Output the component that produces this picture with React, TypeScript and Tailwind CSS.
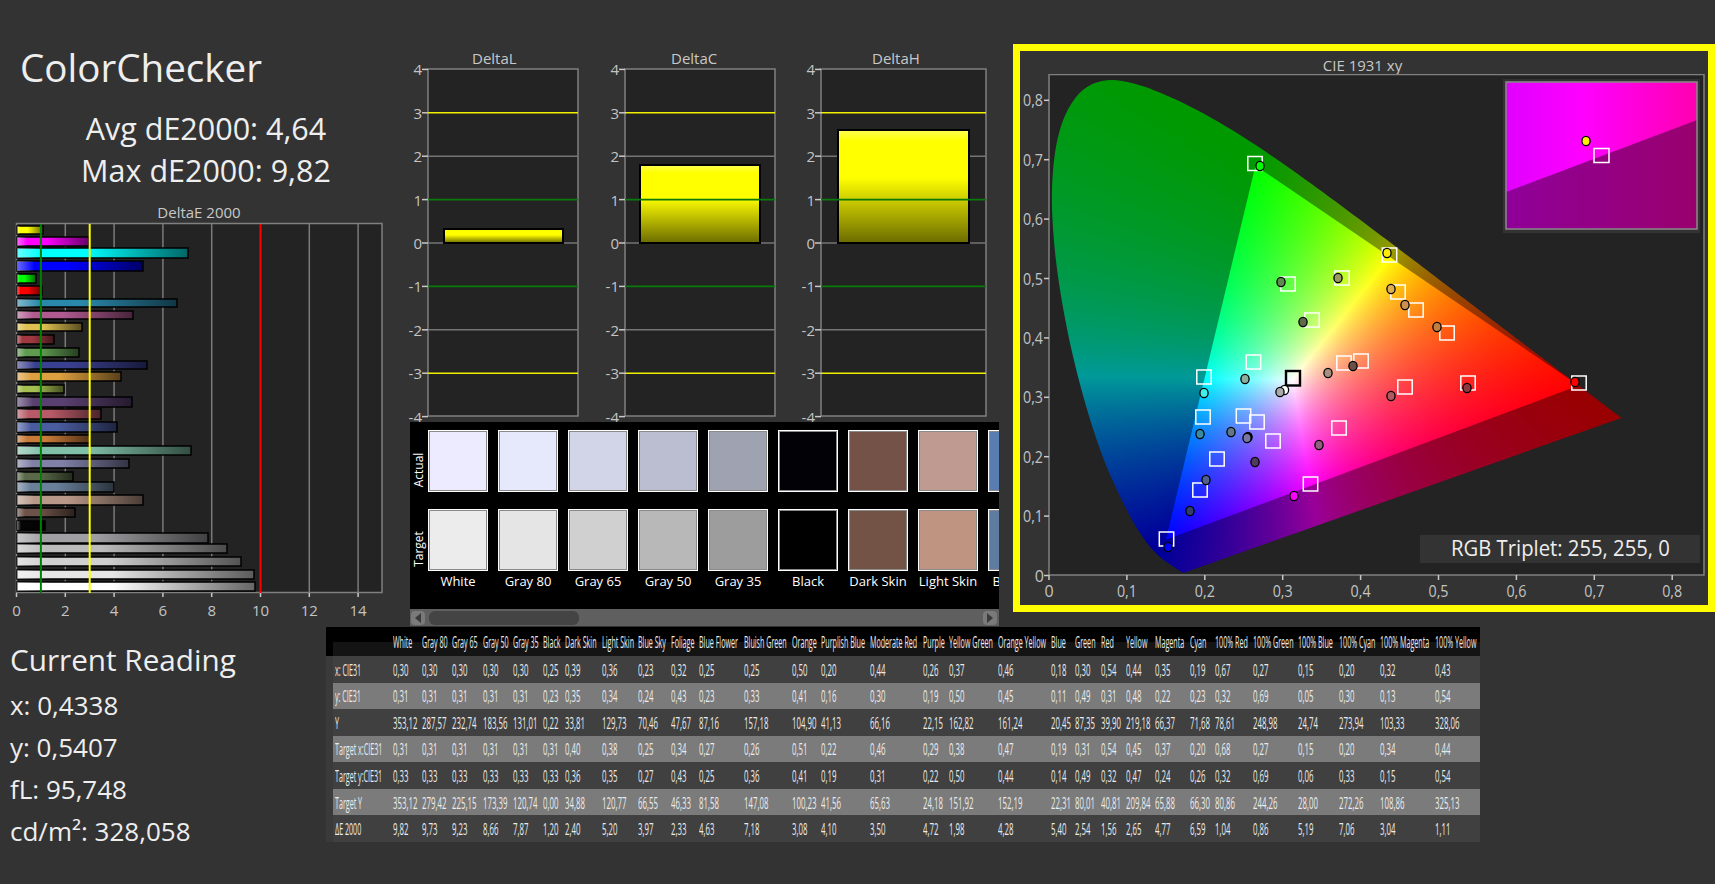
import { useMemo } from "react"

const LOCUS = [
  [0.1741, 0.005], [0.1733, 0.0048], [0.1714, 0.0051], [0.1689, 0.0069], [0.1644, 0.0109], [0.1611, 0.0138],
  [0.1566, 0.0177], [0.151, 0.0227], [0.144, 0.0297], [0.1355, 0.0399], [0.1241, 0.0578], [0.1096, 0.0868],
  [0.0913, 0.1327], [0.0687, 0.2007], [0.0454, 0.295], [0.0235, 0.4127], [0.0082, 0.5384], [0.0039, 0.6548],
  [0.0139, 0.7502], [0.0389, 0.812], [0.0743, 0.8338], [0.1142, 0.8262], [0.1547, 0.8059], [0.1929, 0.7816],
  [0.2296, 0.7543], [0.2658, 0.7243], [0.3016, 0.6923], [0.3373, 0.6589], [0.3731, 0.6245], [0.4087, 0.5896],
  [0.4441, 0.5547], [0.4788, 0.5202], [0.5125, 0.4866], [0.5448, 0.4544], [0.5752, 0.4242], [0.6029, 0.3965],
  [0.627, 0.3725], [0.6482, 0.3514], [0.6658, 0.334], [0.6801, 0.3197], [0.6915, 0.3083], [0.7006, 0.2993],
  [0.7079, 0.292], [0.714, 0.2859], [0.719, 0.2809], [0.726, 0.274], [0.7347, 0.2653],
]

// P3 primaries, measured off the target squares
const GAMUT = [[0.68, 0.32], [0.265, 0.69], [0.15, 0.06]]

const px = (x: number) => 1049 + 779 * x
const py = (y: number) => 575.5 - 594 * y

// catmull-rom through the 5nm points so the horseshoe stays round
function smoothLocus() {
  const out: number[][] = []
  const n = LOCUS.length
  for (let i = 0; i < n - 1; i++) {
    const p0 = LOCUS[Math.max(i - 1, 0)]
    const p1 = LOCUS[i]
    const p2 = LOCUS[i + 1]
    const p3 = LOCUS[Math.min(i + 2, n - 1)]
    for (let k = 0; k < 6; k++) {
      const t = k / 6
      const f = (a: number, b: number, c: number, d: number) =>
        0.5 * (2 * b + (c - a) * t + (2 * a - 5 * b + 4 * c - d) * t * t + (3 * b - a - 3 * c + d) * t * t * t)
      out.push([f(p0[0], p1[0], p2[0], p3[0]), f(p0[1], p1[1], p2[1], p3[1])])
    }
  }
  out.push(LOCUS[n - 1])
  return out
}

function chroma(x: number, y: number, level: number) {
  const X = x / y
  const Z = (1 - x - y) / y
  const R = Math.max(2.4935 * X - 0.9314 - 0.4027 * Z, 0)
  const G = Math.max(-0.8295 * X + 1.7627 + 0.0236 * Z, 0)
  const B = Math.max(0.0358 * X - 0.0762 + 0.9569 * Z, 0)
  const f = level / (Math.max(R, G, B) || 1)
  return `rgb(${Math.round(R * f)},${Math.round(G * f)},${Math.round(B * f)})`
}

function inLocus(x: number, y: number) {
  let hit = false
  for (let i = 0, j = LOCUS.length - 1; i < LOCUS.length; j = i++) {
    const [xi, yi] = LOCUS[i]
    const [xj, yj] = LOCUS[j]
    if (yi > y !== yj > y && x < ((xj - xi) * (y - yi)) / (yj - yi) + xi) hit = !hit
  }
  return hit
}

// signed distance into the gamut triangle, negative when outside
function gamutDistance(x: number, y: number) {
  let d = Infinity
  for (let i = 0; i < 3; i++) {
    const [ax, ay] = GAMUT[i]
    const [bx, by] = GAMUT[(i + 1) % 3]
    const len = Math.hypot(bx - ax, by - ay)
    d = Math.min(d, ((bx - ax) * (y - ay) - (by - ay) * (x - ax)) / len)
  }
  return d
}

const COLUMNS: [string, number][] = [
  ["White", 29.5], ["Gray 80", 30], ["Gray 65", 30.5], ["Gray 50", 30.5], ["Gray 35", 30], ["Black", 22], ["Dark Skin", 37],
  ["Light Skin", 36], ["Blue Sky", 33], ["Foliage", 28], ["Blue Flower", 45], ["Bluish Green", 47.5], ["Orange", 29.5],
  ["Purplish Blue", 49], ["Moderate Red", 52.6], ["Purple", 26.4], ["Yellow Green", 49], ["Orange Yellow", 53], ["Blue", 24.5],
  ["Green", 25.5], ["Red", 25], ["Yellow", 29], ["Magenta", 35], ["Cyan", 25], ["100% Red", 37.6], ["100% Green", 45.9],
  ["100% Blue", 40.5], ["100% Cyan", 41], ["100% Magenta", 55], ["100% Yellow", 45],
]

const ROWS: [string, string][] = [
  ["x: CIE31", "0,30 0,30 0,30 0,30 0,30 0,25 0,39 0,36 0,23 0,32 0,25 0,25 0,50 0,20 0,44 0,26 0,37 0,46 0,18 0,30 0,54 0,44 0,35 0,19 0,67 0,27 0,15 0,20 0,32 0,43"],
  ["y: CIE31", "0,31 0,31 0,31 0,31 0,31 0,23 0,35 0,34 0,24 0,43 0,23 0,33 0,41 0,16 0,30 0,19 0,50 0,45 0,11 0,49 0,31 0,48 0,22 0,23 0,32 0,69 0,05 0,30 0,13 0,54"],
  ["Y", "353,12 287,57 232,74 183,56 131,01 0,22 33,81 129,73 70,46 47,67 87,16 157,18 104,90 41,13 66,16 22,15 162,82 161,24 20,45 87,35 39,90 219,18 66,37 71,68 78,61 248,98 24,74 273,94 103,33 328,06"],
  ["Target x:CIE31", "0,31 0,31 0,31 0,31 0,31 0,31 0,40 0,38 0,25 0,34 0,27 0,26 0,51 0,22 0,46 0,29 0,38 0,47 0,19 0,31 0,54 0,45 0,37 0,20 0,68 0,27 0,15 0,20 0,34 0,44"],
  ["Target y:CIE31", "0,33 0,33 0,33 0,33 0,33 0,33 0,36 0,35 0,27 0,43 0,25 0,36 0,41 0,19 0,31 0,22 0,50 0,44 0,14 0,49 0,32 0,47 0,24 0,26 0,32 0,69 0,06 0,33 0,15 0,54"],
  ["Target Y", "353,12 279,42 225,15 173,39 120,74 0,00 34,88 120,77 66,55 46,33 81,58 147,08 100,23 41,56 65,63 24,18 151,92 152,19 22,31 80,01 40,81 209,84 65,88 66,30 80,86 244,26 28,00 272,26 108,86 325,13"],
  ["ΔE 2000", "9,82 9,73 9,23 8,66 7,87 1,20 2,40 5,20 3,97 2,33 4,63 7,18 3,08 4,10 3,50 4,72 1,98 4,28 5,40 2,54 1,56 2,65 4,77 6,59 1,04 0,86 5,19 7,06 3,04 1,11"],
]

// top, height, right edge, colour (top of the chart first)
const BARS: [number, number, number, string][] = [
  [226, 8, 43, "#ffff00"], [237, 9, 89, "#ff00ff"], [248, 10, 188, "#00ffff"], [261, 10, 143, "#0000ff"], [274, 9, 36, "#00ff00"],
  [286, 9, 42, "#ff0000"], [299, 8, 177, "#2a88aa"], [311, 8, 133, "#b05a90"], [323, 8, 82, "#e0c050"], [335, 9, 54, "#a03840"],
  [348, 9, 79, "#5f9a50"], [361, 8, 147, "#3a4090"], [372, 9, 121, "#dda040"], [385, 8, 64, "#a5be50"], [397, 10, 132, "#5a4070"],
  [409, 10, 101, "#b85a68"], [422, 10, 117, "#4a5ca0"], [435, 8, 90, "#c87a38"], [446, 9, 191, "#80c0a8"], [459, 9, 129, "#8080a8"],
  [472, 9, 73, "#5a6a48"], [482, 10, 114, "#6a809a"], [495, 10, 143, "#b89888"], [508, 9, 75, "#6c5248"], [521, 9, 45, "#050505"],
  [533, 10, 208, "#a0a0a4"], [544, 9, 227, "#bbbbbb"], [557, 9, 241, "#d0d0d0"], [570, 9, 254, "#e5e5e5"], [582, 9, 255, "#ffffff"],
]

const SWATCHES = [
  ["White", "#ecebff", "#ececec"], ["Gray 80", "#e6e8fc", "#e5e5e5"], ["Gray 65", "#d2d4e8", "#d0d0d0"], ["Gray 50", "#bbbed0", "#b8b8b8"],
  ["Gray 35", "#9fa2b1", "#9d9d9d"], ["Black", "#020206", "#000000"], ["Dark Skin", "#745248", "#735345"], ["Light Skin", "#bf9a90", "#bf9480"],
  ["Blue Sky", "#5a7db0", "#5e7ba0"],
]

const SQUARES = [
  [1255, 163.5], [1389.5, 255], [1288, 284], [1342, 278], [1398, 292], [1416, 310], [1312, 320], [1447, 333], [1253.5, 362], [1361, 361],
  [1344, 363], [1204, 377], [1468, 383], [1405, 387], [1579, 383], [1203, 417], [1243.5, 416], [1257, 422], [1273, 441], [1339, 428],
  [1217, 459], [1200, 490], [1310.5, 484], [1166.5, 539],
]

const DOTS: [number, number, string][] = [
  [1260, 166, "#00ff00"], [1387, 253, "#ffee00"], [1281, 282, "#5f8a50"], [1338, 278, "#9a9a60"], [1391, 289, "#e0b050"], [1405, 305, "#cc9050"],
  [1303, 322, "#5d6b4a"], [1437, 327, "#c08040"], [1245, 379, "#8ab0a0"], [1328, 373, "#a89080"], [1353, 366, "#6a5048"], [1204, 393, "#40f0e8"],
  [1284.5, 390, "#ffffff"], [1280, 392, "#aaaaaa"], [1391, 396, "#b05a60"], [1467, 388, "#903840"], [1575, 382, "#ff0000"], [1200, 434, "#3a8aa0"],
  [1231, 432, "#607888"], [1248, 437, "#000000"], [1247, 438, "#7878a0"], [1319, 445, "#906080"], [1255, 462, "#503a60"], [1206, 480, "#506090"],
  [1294, 496, "#ff00ff"], [1190, 511, "#304068"], [1168, 547, "#0000ff"],
]

const TICK = "#c4c4c4"

function DeltaEChart() {
  const grid = [2, 4, 6, 8, 12, 14]
  const x = (v: number) => 16.5 + 24.4 * v
  return (
    <svg viewBox="6 222 394 400" className="w-[394px] h-[400px] ml-[6px] block" fontSize="15" fill={TICK}>
      <defs>
        <linearGradient id="sheen">
          <stop offset="0" stopColor="#fff" stopOpacity="0.42" />
          <stop offset="0.14" stopColor="#fff" stopOpacity="0" />
          <stop offset="0.4" stopColor="#000" stopOpacity="0" />
          <stop offset="1" stopColor="#000" stopOpacity="0.6" />
        </linearGradient>
      </defs>
      <rect x="16.5" y="223.5" width="365.5" height="369" fill="#232323" stroke="#808080" strokeWidth="1.5" />
      {grid.map((v) => (
        <line key={v} x1={x(v)} x2={x(v)} y1="224" y2="592" stroke="#7a7a7a" strokeWidth="1.5" />
      ))}
      {BARS.map(([top, h, right, color]) => (
        <g key={top}>
          <rect x="17" y={top} width={right - 17} height={h} fill={color} stroke="#000" strokeWidth="1.5" />
          <rect x="17" y={top} width={right - 17} height={h} fill="url(#sheen)" />
        </g>
      ))}
      <line x1={x(1)} x2={x(1)} y1="224" y2="593" stroke="#008000" strokeWidth="2" />
      <line x1={x(3)} x2={x(3)} y1="224" y2="593" stroke="#ffff00" strokeWidth="2" />
      <line x1={x(10)} x2={x(10)} y1="224" y2="593" stroke="#ff0000" strokeWidth="2" />
      {[0, 2, 4, 6, 8, 10, 12, 14].map((v) => (
        <g key={v}>
          <line x1={x(v)} x2={x(v)} y1="593" y2="597" stroke="#c8c8c8" strokeWidth="1.5" />
          <text x={x(v)} y="616" textAnchor="middle">{v}</text>
        </g>
      ))}
    </svg>
  )
}

function DeltaChart({ id, left, right, barLeft, barRight, barTop }: { id: string; left: number; right: number; barLeft: number; barRight: number; barTop: number }) {
  const y = (v: number) => 243 - 43.4 * v
  const lineColor = (v: number) => (Math.abs(v) === 3 ? "#f0f000" : Math.abs(v) === 1 ? "#0a7a0a" : "#757575")
  const w = right - left + 23
  return (
    <svg viewBox={`${left - 22} 68 ${w} 354`} style={{ width: w }} className="h-[354px] block overflow-visible" fontSize="15" fill={TICK}>
      <defs>
        <linearGradient id={id} x1="0" x2="0" y1="0" y2="1">
          <stop offset="0" stopColor="#ffff55" />
          <stop offset="0.1" stopColor="#ffff00" />
          <stop offset="0.42" stopColor="#ffff00" />
          <stop offset="1" stopColor="#6b6b00" />
        </linearGradient>
      </defs>
      <rect x={left} y="69" width={right - left} height="347" fill="#232323" stroke="#808080" strokeWidth="1.5" />
      {[2, 0, -2].map((v) => (
        <line key={v} x1={left} x2={right} y1={y(v)} y2={y(v)} stroke={lineColor(v)} strokeWidth="1.6" />
      ))}
      <rect x={barLeft} y={barTop} width={barRight - barLeft} height={243 - barTop} fill={`url(#${id})`} stroke="#000" strokeWidth="2" />
      {[3, 1, -1, -3].map((v) => (
        <line key={v} x1={left} x2={right} y1={y(v)} y2={y(v)} stroke={lineColor(v)} strokeWidth="1.6" />
      ))}
      {[4, 3, 2, 1, 0, -1, -2, -3, -4].map((v) => (
        <g key={v}>
          <line x1={left - 6} x2={left} y1={y(v)} y2={y(v)} stroke="#c8c8c8" strokeWidth="1.5" />
          <text x={left - 6} y={y(v) + 6} textAnchor="end">{v}</text>
        </g>
      ))}
    </svg>
  )
}

function Cie() {
  const cells = useMemo(() => {
    const dim: { x: number; y: number; c: string }[] = []
    const bright: { x: number; y: number; c: string }[] = []
    for (let yy = 76; yy < 576; yy += 2) {
      for (let xx = 1050; xx < 1625; xx += 2) {
        const cx = (xx + 1 - 1049) / 779
        const cy = (575.5 - yy - 1) / 594
        if (cy <= 0) continue
        const d = gamutDistance(cx, cy)
        if (d > -0.006) bright.push({ x: xx, y: yy, c: chroma(cx, cy, 255) })
        if (d < 0.006 && (inLocus(cx, cy) || inLocus(cx + 0.008, cy) || inLocus(cx - 0.008, cy) || inLocus(cx, cy + 0.008) || inLocus(cx, cy - 0.008))) {
          dim.push({ x: xx, y: yy, c: chroma(cx, cy, 153) })
        }
      }
    }
    return { dim, bright }
  }, [])
  const outline = smoothLocus().map(([x, y]) => `${px(x)},${py(y)}`).join(" ")
  const triangle = GAMUT.map(([x, y]) => `${px(x)},${py(y)}`).join(" ")
  return (
    <svg viewBox="1020 74 687 530" className="w-[687px] h-[530px] block" fontSize="16" fill={TICK}>
      <defs>
        <clipPath id="locus"><polygon points={outline} /></clipPath>
        <clipPath id="gamut"><polygon points={triangle} /></clipPath>
        <linearGradient id="insetTop">
          <stop offset="0" stopColor="#e000ff" />
          <stop offset="0.4" stopColor="#ff00ff" />
          <stop offset="1" stopColor="#ff00b0" />
        </linearGradient>
        <linearGradient id="insetLow">
          <stop offset="0" stopColor="#8f0099" />
          <stop offset="1" stopColor="#99006e" />
        </linearGradient>
      </defs>
      <rect x="1049" y="74.5" width="655" height="500.5" fill="#232323" stroke="#808080" strokeWidth="1.5" />
      <g clipPath="url(#locus)" shapeRendering="crispEdges">
        {cells.dim.map((c) => (
          <rect key={`${c.x}-${c.y}`} x={c.x} y={c.y} width="2" height="2" fill={c.c} />
        ))}
      </g>
      <g clipPath="url(#gamut)" shapeRendering="crispEdges">
        {cells.bright.map((c) => (
          <rect key={`${c.x}-${c.y}`} x={c.x} y={c.y} width="2" height="2" fill={c.c} />
        ))}
      </g>
      {SQUARES.map(([x, y]) => (
        <rect key={`${x}-${y}`} x={x - 7.2} y={y - 7} width="14.4" height="14" fill="none" stroke="#fff" strokeWidth="1.5" />
      ))}
      <rect x="1286" y="371" width="14" height="14.5" fill="none" stroke="#000" strokeWidth="2.4" />
      {DOTS.map(([x, y, c]) => (
        <ellipse key={`${x}-${y}`} cx={x} cy={y} rx="4.1" ry="4.6" fill={c} stroke="#000" strokeWidth="1.3" />
      ))}
      <rect x="1503" y="79" width="197" height="154" fill="#333" />
      <rect x="1506" y="82" width="191" height="147" fill="url(#insetTop)" />
      <polygon points="1506,192 1697,120 1697,229 1506,229" fill="url(#insetLow)" />
      <rect x="1506" y="82" width="191" height="147" fill="none" stroke="#8a8a8a" strokeWidth="1.5" />
      <rect x="1594" y="148.5" width="15" height="14" fill="none" stroke="#fff" strokeWidth="1.5" />
      <ellipse cx="1586" cy="141" rx="4.1" ry="4.6" fill="#ffee00" stroke="#000" strokeWidth="1.3" />
      {[0, 0.1, 0.2, 0.3, 0.4, 0.5, 0.6, 0.7, 0.8].map((v) => {
        const label = v === 0 ? "0" : v.toFixed(1).replace(".", ",")
        return (
          <g key={v}>
            <line x1={px(v)} x2={px(v)} y1="575" y2="580" stroke="#c8c8c8" strokeWidth="1.5" />
            <text x={px(v)} y="597" textAnchor="middle" textLength={v === 0 ? undefined : 20} lengthAdjust="spacingAndGlyphs">{label}</text>
            <line x1="1044" x2="1049" y1={py(v)} y2={py(v)} stroke="#c8c8c8" strokeWidth="1.5" />
            <text x={v === 0 ? 1044 : 1023} y={py(v) + 6} textAnchor={v === 0 ? "end" : "start"} textLength={v === 0 ? undefined : 20} lengthAdjust="spacingAndGlyphs">{label}</text>
          </g>
        )
      })}
    </svg>
  )
}

function Swatch({ color }: { color: string }) {
  return (
    <div className="h-[62px] w-[60px] shrink-0 border border-white shadow-[inset_0_0_0_1px_#8a8a8a]" style={{ background: color }} />
  )
}

function SwatchPanel() {
  return (
    <div className="relative w-[589px] h-[204px] ml-1 flex flex-col">
      <div className="flex-1 bg-black overflow-hidden flex">
        <div className="w-[18px] shrink-0 flex flex-col text-white text-[12px] font-medium pt-2">
          <div className="h-[79px] flex items-center justify-center"><span className="-rotate-90 block">Actual</span></div>
          <div className="h-[79px] flex items-center justify-center"><span className="-rotate-90 block">Target</span></div>
        </div>
        <div className="flex gap-[10px] pt-2">
          {SWATCHES.map(([name, actual, target]) => (
            <div key={name} className="w-[60px] shrink-0 flex flex-col items-center">
              <Swatch color={actual} />
              <div className="h-[17px]" />
              <Swatch color={target} />
              <div className="text-[13px] leading-5 text-white whitespace-nowrap">{name}</div>
            </div>
          ))}
        </div>
      </div>
      <div className="h-[17px] bg-[#5f5f5f] flex items-center px-[1px] gap-1">
        <div className="w-[14px] h-[14px] rounded-sm bg-[#7a7a7a] flex items-center justify-center">
          <svg viewBox="0 0 8 10" className="w-2 h-[10px]"><polygon points="7,0 7,10 1,5" fill="#3a3a3a" /></svg>
        </div>
        <div className="w-[150px] h-[14px] rounded-md bg-[#444444]" />
        <div className="flex-1" />
        <div className="w-[14px] h-[14px] rounded-sm bg-[#7a7a7a] flex items-center justify-center mr-[1px]">
          <svg viewBox="0 0 8 10" className="w-2 h-[10px]"><polygon points="1,0 1,10 7,5" fill="#3a3a3a" /></svg>
        </div>
      </div>
    </div>
  )
}

function Narrow({ children }: { children: React.ReactNode }) {
  return <span className="inline-block origin-left scale-x-[0.46] whitespace-nowrap">{children}</span>
}

function Narrower({ children }: { children: React.ReactNode }) {
  return <span className="inline-block origin-left scale-x-[0.42] whitespace-nowrap">{children}</span>
}

function ReadingsTable() {
  return (
    <table className="table-fixed border-collapse w-[1154px] h-[215px] text-[17px] leading-none text-[#ececec]">
      <colgroup>
        <col className="w-[7px]" />
        <col className="w-[59.5px]" />
        {COLUMNS.map(([name, w]) => (
          <col key={name} style={{ width: w }} />
        ))}
      </colgroup>
      <thead>
        <tr className="h-[29px] bg-linear-to-b from-black from-50% to-[#141414] to-50%">
          <th className="bg-black p-0" />
          <th className="p-0" />
          {COLUMNS.map(([name]) => (
            <th key={name} className="p-0 text-left font-normal"><Narrower>{name}</Narrower></th>
          ))}
        </tr>
      </thead>
      <tbody>
        {ROWS.map(([label, values], i) => (
          <tr key={label} className={i % 2 === 0 ? "bg-[#404040]" : "bg-[#7b7b7b]"}>
            <td className="bg-[#3a3a3a] p-0" />
            <td className="p-0 pl-[2px]"><Narrower>{label}</Narrower></td>
            {values.split(" ").map((v, j) => (
              <td key={j} className="p-0"><Narrow>{v}</Narrow></td>
            ))}
          </tr>
        ))}
      </tbody>
    </table>
  )
}

export default function App() {
  return (
    <div className="w-[1715px] h-[884px] bg-[#333333] overflow-hidden flex flex-col font-['Open_Sans',sans-serif] text-[#eeeeee]">
      <div className="flex h-[627px]">
        {/* left column */}
        <div className="w-[406px] shrink-0">
          <div className="mt-[40px] ml-5 text-[38.6px] leading-[54px]">ColorChecker</div>
          <div className="w-[412px] mt-[13px] text-center text-[30.5px] leading-[42px]">
            <div>Avg dE2000: 4,64</div>
            <div>Max dE2000: 9,82</div>
          </div>
          <div className="w-[398px] mt-[11px] text-center text-[15px] leading-5 text-[#c8c8c8]">DeltaE 2000</div>
          <DeltaEChart />
        </div>

        {/* delta charts + swatches */}
        <div className="w-[607px] shrink-0 flex flex-col">
          <div className="pt-[49px] h-[68px] flex text-[15px] leading-[18px] text-[#c8c8c8]">
            <div className="w-[197px] pl-[66px]">DeltaL</div>
            <div className="w-[196px] pl-[68px]">DeltaC</div>
            <div className="pl-[73px]">DeltaH</div>
          </div>
          <div className="flex gap-[23.5px]">
            <DeltaChart id="barL" left={428} right={578} barLeft={444} barRight={563} barTop={229} />
            <DeltaChart id="barC" left={625} right={775} barLeft={640} barRight={760} barTop={165} />
            <DeltaChart id="barH" left={821} right={986} barLeft={838} barRight={969} barTop={130} />
          </div>
          <SwatchPanel />
        </div>

        {/* CIE diagram */}
        <div className="w-[702px] h-[568px] mt-[44px] border-[7px] border-[#ffff00] bg-[#333333] flex flex-col">
          <div className="h-[23px] text-center text-[15px] leading-[28px] text-[#c8c8c8] pr-[3px]">CIE 1931 xy</div>
          <div className="relative">
            <Cie />
            <div className="absolute left-[400px] top-[461px] w-[280px] h-[28px] bg-[#333333] flex items-center justify-center text-[21px]">
              <span className="inline-block whitespace-nowrap scale-x-[0.965]">RGB Triplet: 255, 255, 0</span>
            </div>
          </div>
        </div>
      </div>

      <div className="flex flex-1">
        <div className="w-[326px] shrink-0 pl-[10px] text-[26px] leading-[42px]">
          <div className="text-[29.7px] mt-[12px] mb-[3px]">Current Reading</div>
          <div>x: 0,4338</div>
          <div>y: 0,5407</div>
          <div>fL: 95,748</div>
          <div>cd/m²: 328,058</div>
        </div>
        <ReadingsTable />
      </div>
    </div>
  )
}
